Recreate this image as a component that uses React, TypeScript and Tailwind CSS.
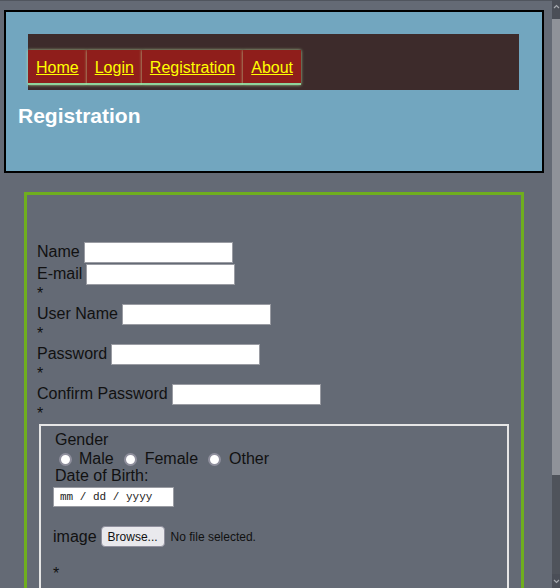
import { Fragment } from "react";

const navLinks = ["Home", "Login", "Registration", "About"];

const fields = [
  { label: "Name", star: false },
  { label: "E-mail", star: true },
  { label: "User Name", star: true },
  { label: "Password", star: true },
  { label: "Confirm Password", star: true },
];

function Radio() {
  return <span className="inline-block w-[13px] h-[13px] rounded-full bg-white border-2 border-[#8f8f9d] shrink-0" />;
}

function Scrollbar() {
  return (
    <div className="w-[8px] h-full flex flex-col bg-[#4f535b]">
      <div className="h-[19px] bg-[#4a4e57] flex items-start justify-center pt-[4px]">
        <svg width="7" height="5" viewBox="0 0 7 5">
          <path d="M1 4 L3.5 1.5 L6 4" stroke="#a7aab0" strokeWidth="1.2" fill="none" />
        </svg>
      </div>
      <div className="h-[456px] bg-[#8f9299]" />
      <div className="flex-1" />
      <div className="h-[14px] bg-[#4a4e57] flex items-end justify-center pb-[4px]">
        <svg width="7" height="5" viewBox="0 0 7 5">
          <path d="M1 1 L3.5 3.5 L6 1" stroke="#a7aab0" strokeWidth="1.2" fill="none" />
        </svg>
      </div>
    </div>
  );
}

export default function App() {
  return (
    <div className="flex w-[560px] h-[588px] overflow-hidden bg-[#646a75] font-['Liberation_Sans',Arial,sans-serif] text-[16px] leading-[18px] text-[#111]">
      <div className="flex-1 min-w-0 border-t border-[#50555e] pt-[9px] pl-[4px]">
        {/* Header */}
        <header className="w-[540px] h-[163px] border-2 border-black bg-[#72a6bf] px-[12px] pt-[22px]">
          <nav className="ml-[10px] w-[491px] h-[56px] bg-[#3d2b2b] pt-[16px]">
            <ul className="flex">
              {navLinks.map((link) => (
                <li
                  key={link}
                  className="h-[35px] flex items-center px-[8px] pt-[2px] bg-[#8f1e1b] border-b-2 border-[#8fd39c] shadow-[0_0_3px_rgba(190,235,170,0.85)]"
                >
                  <a href="#" className="text-[#ffff00] underline">
                    {link}
                  </a>
                </li>
              ))}
            </ul>
          </nav>
          <h1 className="mt-[14px] text-[21px] leading-[24px] font-bold text-white">Registration</h1>
        </header>

        {/* Form */}
        <form className="mt-[19px] ml-[20px] w-[500px] h-[600px] border-[3px] border-[#6fae1e] pt-[46px] pl-[10px]">
          {fields.map((f) => (
            <Fragment key={f.label}>
              <div className="flex items-center h-[22px]">
                <label>{f.label}</label>
                <input type="text" className="ml-[4px] w-[149px] h-[21px] bg-white border border-[#9a9ca3] outline-none" />
              </div>
              {f.star && <div className="h-[18px]">*</div>}
            </Fragment>
          ))}

          <fieldset className="ml-[2px] mt-[1px] w-[470px] border-2 border-[#e6e6e6] pt-[5px] pl-[12px] pb-[40px]">
            <div className="ml-[2px] h-[18px]">Gender</div>
            <div className="flex items-center h-[18px] ml-[6px] pt-[2px]">
              <Radio />
              <span className="ml-[7px]">Male</span>
              <span className="ml-[10px] flex"><Radio /></span>
              <span className="ml-[8px]">Female</span>
              <span className="ml-[10px] flex"><Radio /></span>
              <span className="ml-[8px]">Other</span>
            </div>
            <div className="ml-[2px] h-[18px]">Date of Birth:</div>
            <div className="mt-[2px] w-[121px] h-[20px] bg-white border border-[#9a9ca3] pl-[6px] flex items-center font-['Liberation_Mono',monospace] text-[11px] text-[#222]">
              mm / dd / yyyy
            </div>
            <div className="mt-[19px] flex items-center h-[21px]">
              <span>image</span>
              <button type="button" className="ml-[4px] w-[64px] h-[21px] rounded-[4px] bg-[#e9e9ed] border border-[#8f8f9d] text-[12px] leading-[14px] text-[#111]">
                Browse...
              </button>
              <span className="ml-[6px] text-[12px]">No file selected.</span>
            </div>
            <div className="mt-[18px] h-[18px]">*</div>
          </fieldset>
        </form>
      </div>
      <Scrollbar />
    </div>
  );
}
